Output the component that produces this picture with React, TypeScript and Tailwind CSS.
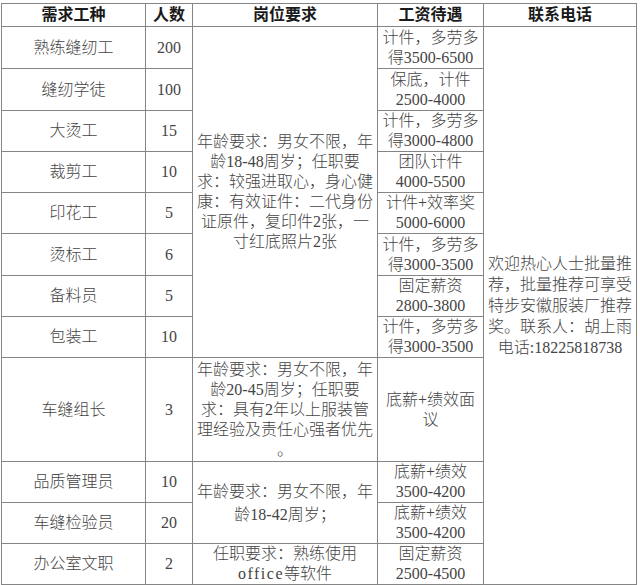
import type { ReactNode } from 'react';

type Job = {
  name: string;
  count: string;
  pay: string[];
  req?: { lines: ReactNode[]; span: string; leading?: string };
};

const ageReq = [
  '年龄要求：男女不限，年',
  '龄18-48周岁；任职要',
  '求：较强进取心，身心健',
  '康：有效证件：二代身份',
  '证原件，复印件2张，一',
  '寸红底照片2张',
];

const jobs: Job[] = [
  { name: '熟练缝纫工', count: '200', pay: ['计件，多劳多', '得3500-6500'], req: { lines: ageReq, span: 'row-span-8' } },
  { name: '缝纫学徒', count: '100', pay: ['保底，计件', '2500-4000'] },
  { name: '大烫工', count: '15', pay: ['计件，多劳多', '得3000-4800'] },
  { name: '裁剪工', count: '10', pay: ['团队计件', '4000-5500'] },
  { name: '印花工', count: '5', pay: ['计件+效率奖', '5000-6000'] },
  { name: '烫标工', count: '6', pay: ['计件，多劳多', '得3000-3500'] },
  { name: '备料员', count: '5', pay: ['固定薪资', '2800-3800'] },
  { name: '包装工', count: '10', pay: ['计件，多劳多', '得3000-3500'] },
  {
    name: '车缝组长',
    count: '3',
    pay: ['底薪+绩效面', '议'],
    req: {
      lines: ['年龄要求：男女不限，年', '龄20-45周岁；任职要', '求：具有2年以上服装管', '理经验及责任心强者优先', '。'],
      span: '',
    },
  },
  {
    name: '品质管理员',
    count: '10',
    pay: ['底薪+绩效', '3500-4200'],
    req: { lines: ['年龄要求：男女不限，年', '龄18-42周岁；'], span: 'row-span-2', leading: 'leading-[23px]' },
  },
  { name: '车缝检验员', count: '20', pay: ['底薪+绩效', '3500-4200'] },
  {
    name: '办公室文职',
    count: '2',
    pay: ['固定薪资', '2500-4500'],
    req: {
      lines: ['任职要求：熟练使用', <><span className="tracking-[1.5px]">office</span>等软件</>],
      span: '',
    },
  },
];

const contact = ['欢迎热心人士批量推', '荐，批量推荐可享受', '特步安徽服装厂推荐', '奖。联系人：胡上雨', '电话:18225818738'];

function Cell({ children, className = '' }: { children: ReactNode; className?: string }) {
  return <div className={`flex flex-col items-center justify-center bg-white text-center ${className}`}>{children}</div>;
}

function Lines({ lines }: { lines: ReactNode[] }) {
  return (
    <>
      {lines.map((line, i) => (
        <div key={i} className="whitespace-nowrap">
          {line}
        </div>
      ))}
    </>
  );
}

export default function App() {
  return (
    <div className="h-[585px] w-[640px] bg-white pt-[3px] pl-[1px] font-['Liberation_Serif','Noto_Sans_CJK_SC',serif] text-[16px] font-light leading-[20px] text-[#444]">
      <div className="grid w-[636px] grid-cols-[143px_46px_184px_105px_152px] grid-rows-[22px_41px_41px_40px_40px_40px_41px_40px_40px_103px_40px_40px_40px] gap-px bg-[#858585] p-px">
        {['需求工种', '人数', '岗位要求', '工资待遇', '联系电话'].map((h) => (
          <Cell key={h} className="font-bold text-[#1a1a1a]">
            {h}
          </Cell>
        ))}

        {jobs.map((job, i) => [
          <Cell key={`n${i}`}>{job.name}</Cell>,
          <Cell key={`c${i}`}>{job.count}</Cell>,
          job.req && (
            <Cell key={`r${i}`} className={`${job.req.span} ${job.req.leading ?? ''}`}>
              <Lines lines={job.req.lines} />
            </Cell>
          ),
          <Cell key={`p${i}`}>
            <Lines lines={job.pay} />
          </Cell>,
          i === 0 && (
            <Cell key="contact" className="row-span-12 leading-[21px]">
              <Lines lines={contact} />
            </Cell>
          ),
        ])}
      </div>
    </div>
  );
}
